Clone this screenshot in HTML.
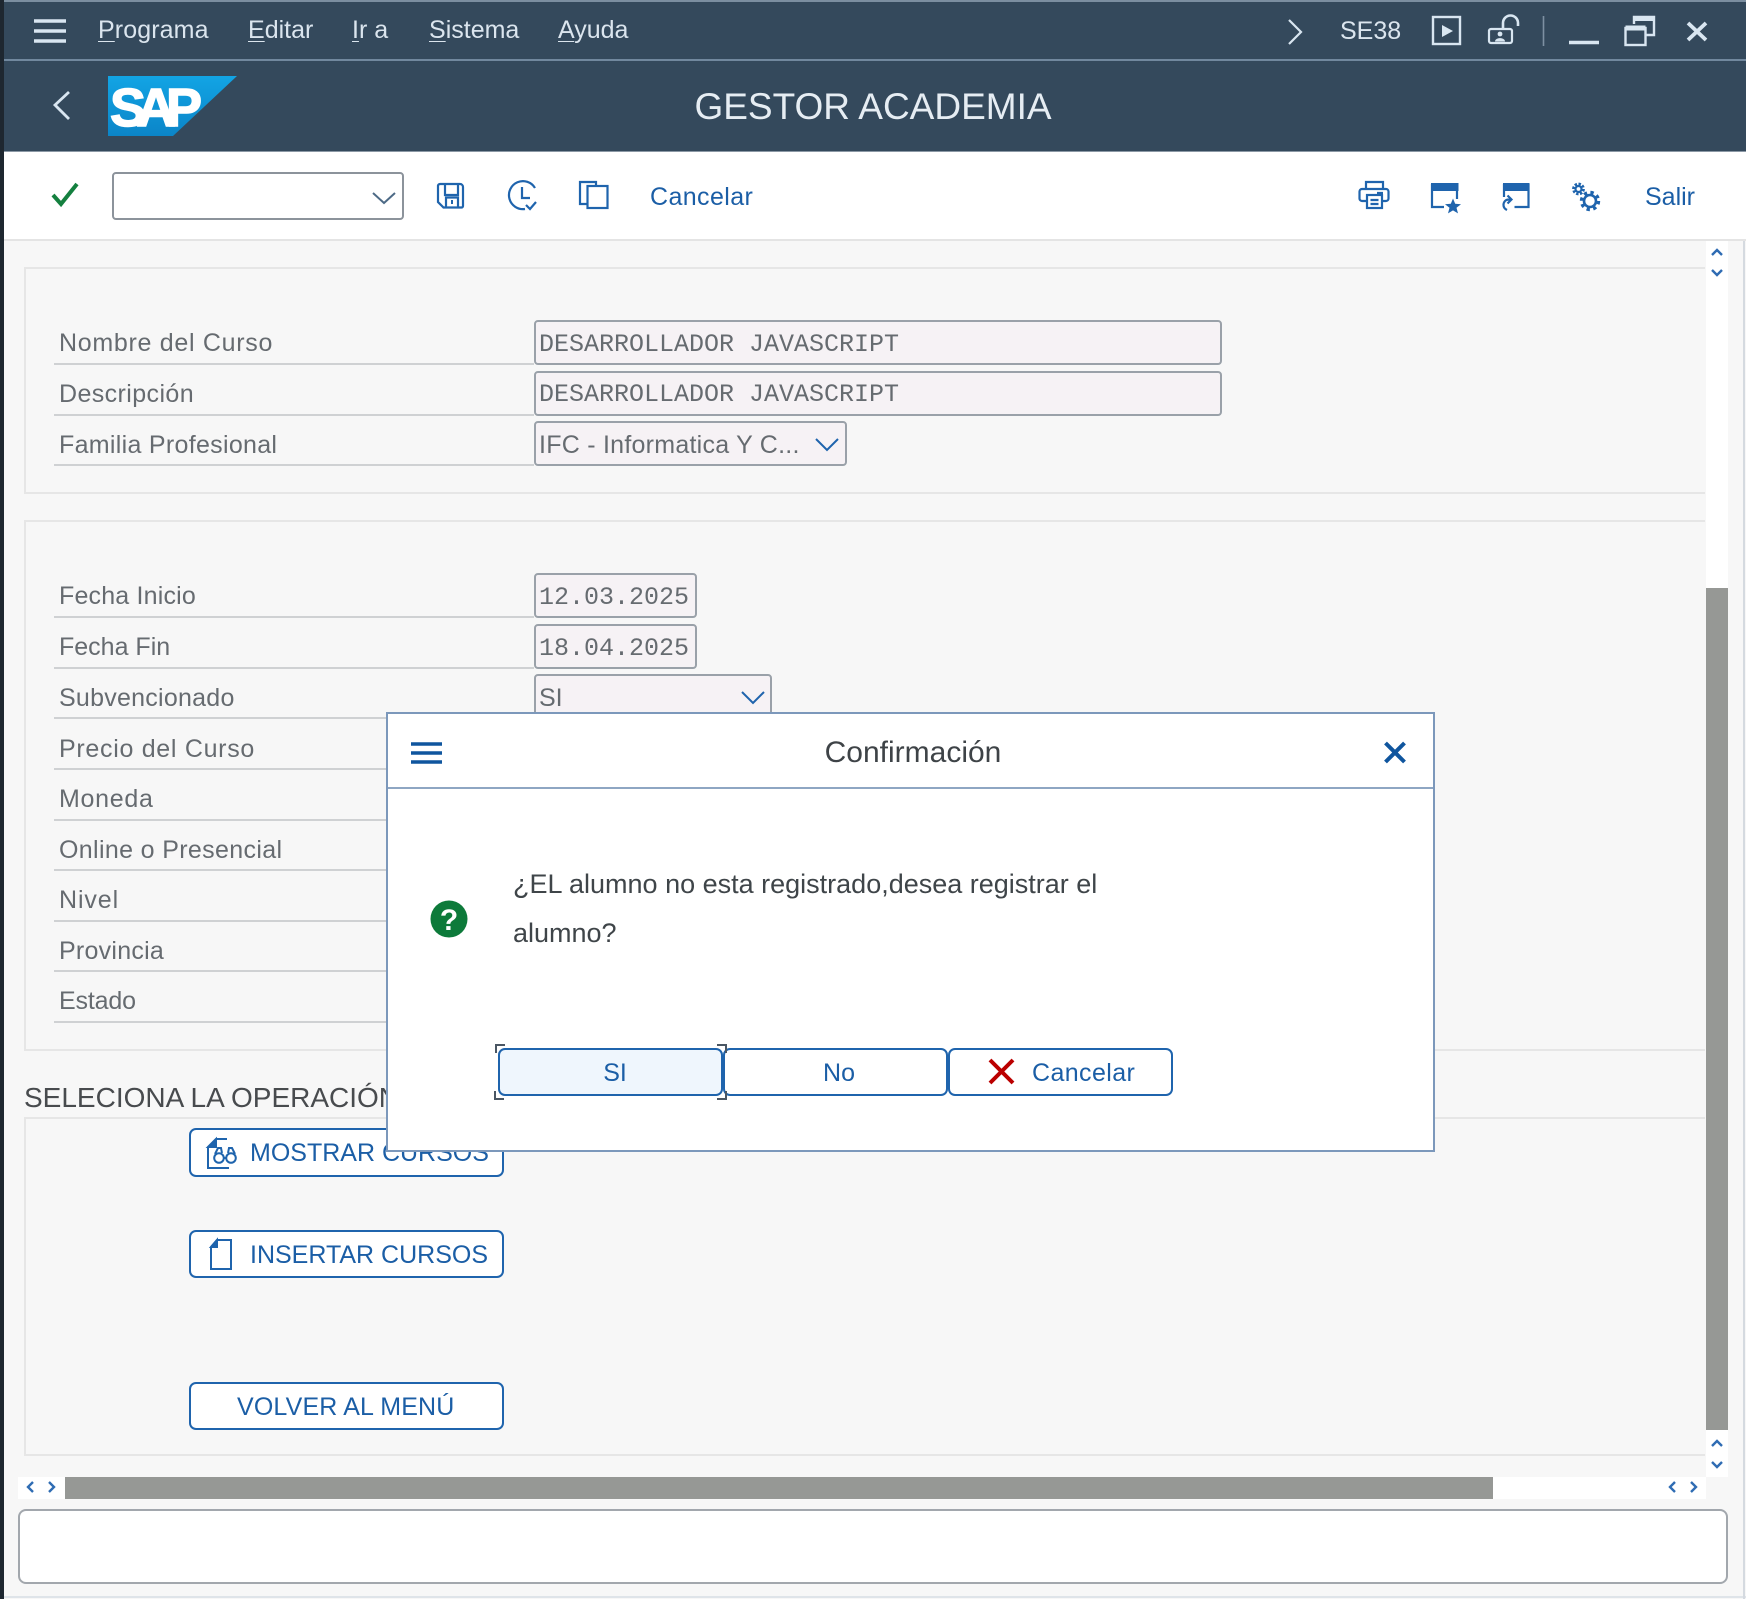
<!DOCTYPE html>
<html lang="es"><head><meta charset="utf-8"><title>GESTOR ACADEMIA</title>
<style>
*{box-sizing:border-box}
html,body{margin:0;padding:0;width:1746px;height:1599px;overflow:hidden;background:#f7f7f7}
body{position:relative;font-family:"Liberation Sans",sans-serif;filter:blur(.35px)}
.b{position:absolute}
.t{position:absolute;white-space:nowrap;line-height:30px;height:30px;font-size:25px}
.m{color:#dbe5ee}
.m u{text-underline-offset:3px;text-decoration-thickness:1px}
.a{color:#1b5ea6}
.l{color:#666b70}
.ln{position:absolute;left:54px;width:480px;height:2px;background:#cfd1d3}
.in{position:absolute;left:534px;background:#f6f2f5;border:2px solid #9aa1a9;border-radius:4px}
.mo{position:absolute;white-space:nowrap;left:539px;line-height:30px;font:25px/30px "Liberation Mono",monospace;color:#666b70}
.btn{position:absolute;background:#fff;border:2px solid #1f64ad;border-radius:7px}
.gt{position:absolute;background:#e6e6e6}
svg{position:absolute;left:0;top:0}
</style></head><body>

<!-- shell -->
<div class="b" style="left:0;top:0;width:1746px;height:152px;background:#34495c"></div>
<div class="b" style="left:0;top:0;width:1746px;height:2px;background:#7b8ea0"></div>
<div class="b" style="left:0;top:59px;width:1746px;height:2px;background:#71889e"></div>
<div class="b" style="left:0;top:151px;width:1746px;height:1px;background:#8b98a5"></div>
<div class="b" style="left:0;top:152px;width:1746px;height:87px;background:#fff"></div>
<div class="b" style="left:0;top:239px;width:1746px;height:2px;background:#e4e4e4"></div>

<span class="t m" style="left:98px;top:15px;letter-spacing:.1px"><u>P</u>rograma</span>
<span class="t m" style="left:248px;top:15px"><u>E</u>ditar</span>
<span class="t m" style="left:352px;top:15px"><u>I</u>r a</span>
<span class="t m" style="left:429px;top:15px"><u>S</u>istema</span>
<span class="t m" style="left:558px;top:15px"><u>A</u>yuda</span>
<span class="t m" style="left:1340px;top:16px">SE38</span>
<span class="t" style="left:873px;top:87px;height:40px;line-height:40px;font-size:37px;color:#e6edf3;transform:translateX(-50%)">GESTOR ACADEMIA</span>

<!-- SAP logo + shell icons + toolbar icons -->
<svg width="1746" height="1599" viewBox="0 0 1746 1599" style="z-index:1">
<defs><linearGradient id="g" x1="0" y1="0" x2="0" y2="1"><stop offset="0" stop-color="#12a4e4"/><stop offset="1" stop-color="#0b85c8"/></linearGradient></defs>
<polygon points="108,76 237,76 173,136 108,136" fill="url(#g)"/>
<text x="110" y="126" font-family="Liberation Sans" font-weight="700" font-size="54" fill="#fff" stroke="#fff" stroke-width="1.500" textLength="92" lengthAdjust="spacing">SAP</text>

<g fill="none" stroke="#d9e6f1">
<path d="M34 21h32M34 31h32M34 41h32" stroke-width="3.600"/>
<path d="M69 92L55 105L69 119" stroke-width="2.800"/>
<path d="M1289 20L1301 32L1289 44" stroke-width="2.200"/>
<rect x="1433" y="17" width="27" height="27" stroke-width="2.400"/>
<path d="M1442 25v12l11-6z" fill="#d9e6f1" stroke="none"/>
<!-- lock -->
<rect x="1489" y="29" width="23" height="14" rx="2" stroke-width="2.200"/>
<path d="M1503 29v-6a7.500 7.500 0 0 1 15 0v3" stroke-width="2.600"/>
<circle cx="1500" cy="34" r="2.400" fill="#d9e6f1" stroke="none"/><path d="M1495 41.500c0-4.500 10-4.500 10 0z" fill="#d9e6f1" stroke="none"/>
<path d="M1543.500 16v30" stroke="#7d90a2" stroke-width="1.600"/>
<path d="M1569 42.500h30" stroke-width="3.400"/>
<!-- restore -->
<rect x="1625.500" y="28" width="20" height="17" stroke-width="2.400"/>
<path d="M1625.500 28h20" stroke-width="5"/>
<path d="M1634 24v-7h20v18h-8" stroke-width="2.400"/>
<path d="M1634 19h20" stroke-width="4"/>
<path d="M1688 23L1706 40M1706 23L1688 40" stroke-width="3.800"/>
</g>

<!-- toolbar -->
<path d="M53 195L61 204L77 184" fill="none" stroke="#14803f" stroke-width="4"/>
<path d="M373 193L384 203L395 193" fill="none" stroke="#4d6a86" stroke-width="2"/>
<g fill="none" stroke="#1f64ad" stroke-width="2.200">
<!-- save -->
<path d="M438 186a2 2 0 0 1 2-2h20a3 3 0 0 1 3 3v19a1.500 1.500 0 0 1-1.500 1.500h-18l-5.500-5.500z"/><path d="M445 184v11h13v-11"/><path d="M446 207.500v-10h12v10"/><path d="M452 200v4" stroke-width="2"/>
<!-- history -->
<path d="M535 188A14 14 0 1 0 525 209"/><path d="M522 187v11h8"/><path d="M526 205l4 4l6-7"/>
<!-- copy -->
<path d="M596 185v-3h-16v22h7"/><rect x="587.500" y="186" width="20" height="22"/>
<!-- print -->
<path d="M1366 189v-7h17v7"/><path d="M1366 201h-4a2.500 2.500 0 0 1-2.500-2.500v-7a2.500 2.500 0 0 1 2.500-2.500h24a2.500 2.500 0 0 1 2.500 2.500v7a2.500 2.500 0 0 1-2.500 2.500h-4"/><rect x="1367" y="195" width="15" height="13"/><path d="M1370.500 200h8M1370.500 204h8M1377 193h6"/>
<!-- win star -->
<path d="M1432 184v23h12M1457 184v15"/>
<!-- win back -->
<path d="M1504 184v13M1528.500 184v23h-14"/>
</g>
<rect x="1431" y="183" width="27.500" height="8" fill="#1f64ad"/>
<path d="M1453 198.500l2.200 5.300 5.800.4-4.500 3.600 1.500 5.600-5-3-5 3 1.500-5.600-4.500-3.600 5.800-.4z" fill="#1f64ad"/>
<rect x="1503" y="183" width="26.500" height="8" fill="#1f64ad"/>
<path d="M1511 199.500h-2c-4 0-5.500 3-5.500 5.500c0 2.500 1.500 4 3.500 5M1507.500 195.500l4 4l-4 4" fill="none" stroke="#1f64ad" stroke-width="2.200"/>
<!-- gears -->
<g fill="none" stroke="#1f64ad">
<circle cx="1578.500" cy="189" r="3" stroke-width="2.200"/>
<circle cx="1578.500" cy="189" r="5" stroke-width="2.800" stroke-dasharray="2.400 1.500"/>
<circle cx="1590" cy="201" r="6" stroke-width="2.600"/>
<circle cx="1590" cy="201" r="8.500" stroke-width="3.400" stroke-dasharray="3.300 3.400"/>
</g>
</svg>
<span class="t a" style="left:650px;top:182px;letter-spacing:.4px">Cancelar</span>
<span class="t a" style="left:1645px;top:182px">Salir</span>
<div class="b" style="left:112px;top:172px;width:292px;height:48px;border:2px solid #8c939b;border-radius:4px;background:transparent"></div>

<!-- groups -->
<div class="gt" style="left:24px;top:267px;width:1681px;height:2px"></div>
<div class="gt" style="left:24px;top:492px;width:1681px;height:2px"></div>
<div class="gt" style="left:24px;top:267px;width:2px;height:227px"></div>
<div class="gt" style="left:24px;top:520px;width:1681px;height:2px"></div>
<div class="gt" style="left:24px;top:1049px;width:1681px;height:2px"></div>
<div class="gt" style="left:24px;top:520px;width:2px;height:531px"></div>
<div class="gt" style="left:24px;top:1117px;width:1681px;height:2px"></div>
<div class="gt" style="left:24px;top:1454px;width:1681px;height:2px"></div>
<div class="gt" style="left:24px;top:1117px;width:2px;height:339px"></div>

<!-- form rows -->
<span class="t l" style="left:59px;top:328px;letter-spacing:.7px">Nombre del Curso</span>
<span class="t l" style="left:59px;top:379px;letter-spacing:.4px">Descripción</span>
<span class="t l" style="left:59px;top:430px;letter-spacing:.3px">Familia Profesional</span>
<span class="t l" style="left:59px;top:581px;letter-spacing:.18px">Fecha Inicio</span>
<span class="t l" style="left:59px;top:632px">Fecha Fin</span>
<span class="t l" style="left:59px;top:683px;letter-spacing:.25px">Subvencionado</span>
<span class="t l" style="left:59px;top:734px;letter-spacing:.7px">Precio del Curso</span>
<span class="t l" style="left:59px;top:784px;letter-spacing:.7px">Moneda</span>
<span class="t l" style="left:59px;top:835px;letter-spacing:.35px">Online o Presencial</span>
<span class="t l" style="left:59px;top:885px;letter-spacing:.9px">Nivel</span>
<span class="t l" style="left:59px;top:936px;letter-spacing:.25px">Provincia</span>
<span class="t l" style="left:59px;top:986px;letter-spacing:-.15px">Estado</span>
<div class="ln" style="top:363px"></div><div class="ln" style="top:414px"></div><div class="ln" style="top:464px"></div>
<div class="ln" style="top:616px"></div><div class="ln" style="top:667px"></div><div class="ln" style="top:717px"></div>
<div class="ln" style="top:768px"></div><div class="ln" style="top:819px"></div><div class="ln" style="top:869px"></div>
<div class="ln" style="top:920px"></div><div class="ln" style="top:970px"></div><div class="ln" style="top:1021px"></div>

<div class="in" style="top:320px;width:688px;height:45px"></div>
<div class="in" style="top:371px;width:688px;height:45px"></div>
<div class="in" style="top:421px;width:313px;height:45px"></div>
<div class="in" style="top:573px;width:163px;height:45px"></div>
<div class="in" style="top:624px;width:163px;height:45px"></div>
<div class="in" style="top:674px;width:238px;height:45px"></div>
<span class="mo" style="top:330px">DESARROLLADOR JAVASCRIPT</span>
<span class="mo" style="top:380px">DESARROLLADOR JAVASCRIPT</span>
<span class="t l" style="left:539px;top:430px;letter-spacing:.25px">IFC - Informatica Y C...</span>
<span class="mo" style="top:583px">12.03.2025</span>
<span class="mo" style="top:634px">18.04.2025</span>
<span class="t l" style="left:539px;top:683px">SI</span>
<div class="b" style="left:801px;top:425px;width:43px;height:38px;background:#f6f2f5"></div>
<svg width="1746" height="1599" viewBox="0 0 1746 1599" style="z-index:1">
<path d="M816 439L827 450L838 439M742 692L753 703L764 692" fill="none" stroke="#1f64ad" stroke-width="2"/>
</svg>

<!-- section 3 -->
<span class="t" style="left:24px;top:1083px;font-size:28px;color:#484b4e">SELECIONA LA OPERACIÓN</span>
<div class="btn" style="left:189px;top:1128px;width:315px;height:49px"></div>
<div class="btn" style="left:189px;top:1230px;width:315px;height:48px"></div>
<div class="btn" style="left:189px;top:1382px;width:315px;height:48px"></div>
<span class="t a" style="left:250px;top:1138px">MOSTRAR CURSOS</span>
<span class="t a" style="left:250px;top:1240px">INSERTAR CURSOS</span>
<span class="t a" style="left:237px;top:1392px;letter-spacing:.15px">VOLVER AL MENÚ</span>
<svg width="1746" height="1599" viewBox="0 0 1746 1599" style="z-index:1">
<g fill="none" stroke="#1f64ad" stroke-width="2">
<path d="M227 1139h-11l-8 8v21h21"/><path d="M208 1147h8v-8z" fill="#1f64ad"/>
<circle cx="219" cy="1158" r="4.800"/><circle cx="231" cy="1158" r="4.800"/>
<path d="M215 1154l3-6h3l1 5M228 1153l1-5h3l3 6M224 1158h2"/>
<path d="M231 1240h-14l-6 7v22h20z"/><path d="M211 1247h6v-7z" fill="#1f64ad"/>
</g>
</svg>

<!-- scrollbars -->
<div class="b" style="left:1706px;top:241px;width:22px;height:1236px;background:#fff"></div>
<div class="b" style="left:1706px;top:588px;width:22px;height:842px;background:#969895"></div>
<div class="b" style="left:18px;top:1477px;width:1688px;height:22px;background:#fff"></div>
<div class="b" style="left:65px;top:1477px;width:1428px;height:22px;background:#969895"></div>
<svg width="1746" height="1599" viewBox="0 0 1746 1599" style="z-index:1">
<g fill="none" stroke="#2f6cb3" stroke-width="2.400">
<path d="M1712 255l5-5l5 5M1712 270l5 5l5-5M1712 1446l5-5l5 5M1712 1462l5 5l5-5"/>
<path d="M33 1482l-5 5l5 5M49 1482l5 5l-5 5M1675 1482l-5 5l5 5M1691 1482l5 5l-5 5"/>
</g>
</svg>

<!-- status -->
<div class="b" style="left:18px;top:1509px;width:1710px;height:75px;background:#fff;border:2px solid #a2a7ad;border-radius:8px"></div>
<div class="b" style="left:0;top:1596px;width:1746px;height:2px;background:#dfe4e9"></div>
<div class="b" style="left:1743px;top:241px;width:2px;height:1358px;background:#d5dae0"></div>
<div class="b" style="left:0;top:0;width:4px;height:1599px;background:#1e2730"></div>

<!-- dialog -->
<div class="b" style="left:386px;top:712px;width:1049px;height:440px;background:#fff;border:2px solid #7c98bb;z-index:3">
<div class="b" style="left:0;top:73px;width:1045px;height:2px;background:#8ea6c3"></div>
</div>
<div style="position:absolute;left:0;top:0;z-index:4;width:1746px;height:1599px">
<span class="t" style="left:913px;top:738px;font-size:30px;color:#3e4347;transform:translateX(-50%)">Confirmación</span>
<span class="t" style="left:513px;top:869px;font-size:27px;color:#3f4549">¿EL alumno no esta registrado,desea registrar el</span>
<span class="t" style="left:513px;top:918px;font-size:27px;color:#3f4549">alumno?</span>
<div class="btn" style="left:498px;top:1048px;width:225px;height:48px;background:#eff6fd"></div>
<div class="btn" style="left:723px;top:1048px;width:225px;height:48px"></div>
<div class="btn" style="left:948px;top:1048px;width:225px;height:48px"></div>
<span class="t a" style="left:615px;top:1058px;transform:translateX(-50%)">SI</span>
<span class="t a" style="left:839px;top:1058px;transform:translateX(-50%)">No</span>
<span class="t a" style="left:1032px;top:1058px;letter-spacing:.4px">Cancelar</span>
<svg width="1746" height="1599" viewBox="0 0 1746 1599">
<path d="M411 744h31M411 753h31M411 762h31" fill="none" stroke="#0f559e" stroke-width="3.400"/>
<path d="M1385.500 743L1404.500 762M1404.500 743L1385.500 762" fill="none" stroke="#0f559e" stroke-width="4"/>
<circle cx="449" cy="919" r="18.500" fill="#0d7a3a"/>
<text x="449" y="930" text-anchor="middle" font-family="Liberation Sans" font-weight="700" font-size="30" fill="#fff">?</text>
<path d="M990 1060L1013 1083M1013 1060L990 1083" fill="none" stroke="#bb0000" stroke-width="4"/>
<path d="M505 1045h-9v8M495 1091v8h9M717 1045h9v8M726 1091v8h-9" fill="none" stroke="#4a5663" stroke-width="2"/>
</svg>
</div>
</body></html>
